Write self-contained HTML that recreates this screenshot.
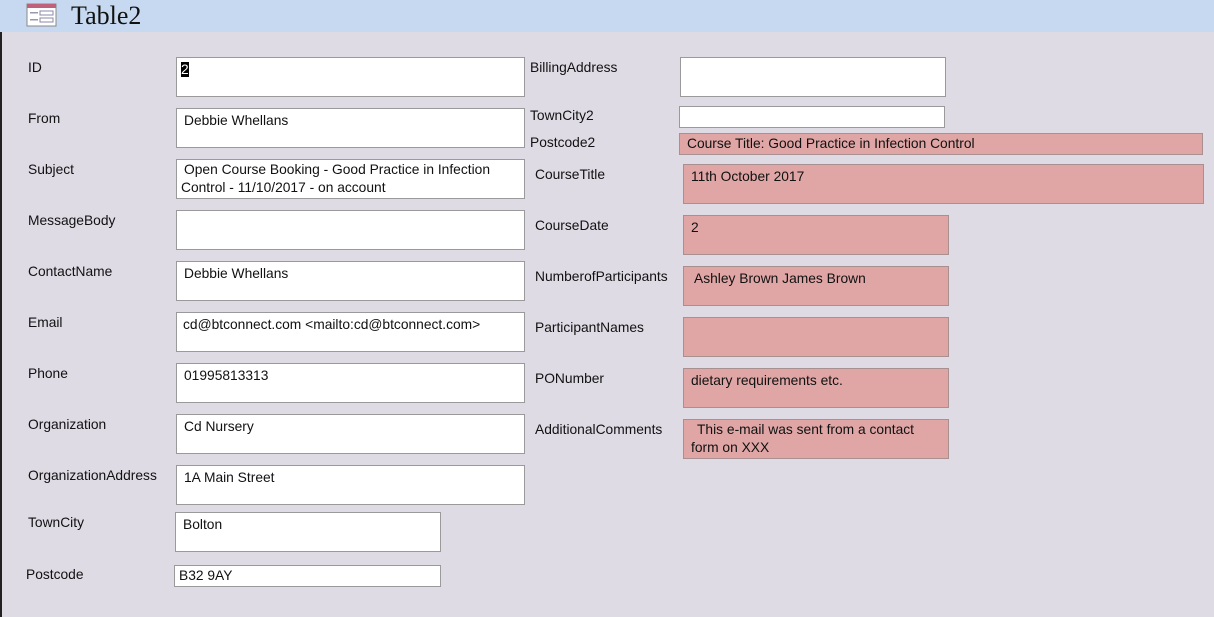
<!DOCTYPE html>
<html><head><style>
body{margin:0;width:1214px;height:617px;background:#dfdbe5;position:relative;overflow:hidden;font-family:"Liberation Sans",sans-serif;font-size:13.8px;color:#111}
.h{position:absolute;left:0;top:0;width:1214px;height:32px;background:#c6d9f0}
.t{position:absolute;left:71px;top:1px;font-family:"Liberation Serif",serif;font-size:26px;color:#111}
.lb{position:absolute;left:0;top:32px;width:2px;height:585px;background:#222}
.l{position:absolute;white-space:nowrap}
.b{position:absolute;background:#fff;border:1px solid #9a9a9a;box-sizing:border-box;padding:3px 7px;line-height:18px;white-space:nowrap}
.p{background:#e0a6a6;border-color:#a89090}
</style></head><body>
<div class="h"></div>
<svg style="position:absolute;left:26px;top:3px" width="32" height="24"><rect x="1" y="1" width="29" height="22" fill="#fff" stroke="#888"/><rect x="1" y="1" width="29" height="4" fill="#c0607a"/><rect x="4" y="9" width="8" height="1.5" fill="#99a"/><rect x="14" y="8" width="13" height="4" fill="none" stroke="#88a"/><rect x="4" y="16" width="8" height="1.5" fill="#99a"/><rect x="14" y="15" width="13" height="4" fill="none" stroke="#88a"/></svg>
<div class="t">Table2</div>
<div class="lb"></div>

<div class="l" style="left:28px;top:60px">ID</div>
<div class="b" style="left:176px;top:57px;width:349px;height:40px;padding-left:4px"><span style="background:#000;color:#fff">2</span></div>
<div class="l" style="left:28px;top:111px">From</div>
<div class="b" style="left:176px;top:108px;width:349px;height:40px">Debbie Whellans</div>
<div class="l" style="left:28px;top:162px">Subject</div>
<div class="b" style="left:176px;top:159px;width:349px;height:40px;padding-left:4px;padding-top:1px"><span style="padding-left:3px">Open Course Booking - Good Practice in Infection</span><br>Control - 11/10/2017 - on account</div>
<div class="l" style="left:28px;top:213px">MessageBody</div>
<div class="b" style="left:176px;top:210px;width:349px;height:40px"></div>
<div class="l" style="left:28px;top:264px">ContactName</div>
<div class="b" style="left:176px;top:261px;width:349px;height:40px">Debbie Whellans</div>
<div class="l" style="left:28px;top:315px">Email</div>
<div class="b" style="left:176px;top:312px;width:349px;height:40px;padding-left:6px">cd@btconnect.com &lt;mailto:cd@btconnect.com&gt;</div>
<div class="l" style="left:28px;top:366px">Phone</div>
<div class="b" style="left:176px;top:363px;width:349px;height:40px">01995813313</div>
<div class="l" style="left:28px;top:417px">Organization</div>
<div class="b" style="left:176px;top:414px;width:349px;height:40px">Cd Nursery</div>
<div class="l" style="left:28px;top:468px">OrganizationAddress</div>
<div class="b" style="left:176px;top:465px;width:349px;height:40px">1A Main Street</div>
<div class="l" style="left:28px;top:515px">TownCity</div>
<div class="b" style="left:175px;top:512px;width:266px;height:40px">Bolton</div>
<div class="l" style="left:26px;top:567px">Postcode</div>
<div class="b" style="left:174px;top:565px;width:267px;height:22px;padding:1px 4px">B32 9AY</div>

<div class="l" style="left:530px;top:60px">BillingAddress</div>
<div class="b" style="left:680px;top:57px;width:266px;height:40px"></div>
<div class="l" style="left:530px;top:108px">TownCity2</div>
<div class="b" style="left:679px;top:106px;width:266px;height:22px"></div>
<div class="l" style="left:530px;top:135px">Postcode2</div>
<div class="b p" style="left:679px;top:133px;width:524px;height:22px;padding:1px 7px">Course Title: Good Practice in Infection Control</div>
<div class="l" style="left:535px;top:167px">CourseTitle</div>
<div class="b p" style="left:683px;top:164px;width:521px;height:40px">11th October 2017</div>
<div class="l" style="left:535px;top:218px">CourseDate</div>
<div class="b p" style="left:683px;top:215px;width:266px;height:40px">2</div>
<div class="l" style="left:535px;top:269px">NumberofParticipants</div>
<div class="b p" style="left:683px;top:266px;width:266px;height:40px;padding-left:10px">Ashley Brown James Brown</div>
<div class="l" style="left:535px;top:320px">ParticipantNames</div>
<div class="b p" style="left:683px;top:317px;width:266px;height:40px"></div>
<div class="l" style="left:535px;top:371px">PONumber</div>
<div class="b p" style="left:683px;top:368px;width:266px;height:40px">dietary requirements etc.</div>
<div class="l" style="left:535px;top:422px">AdditionalComments</div>
<div class="b p" style="left:683px;top:419px;width:266px;height:40px;padding-left:13px;padding-top:1px">This e-mail was sent from a contact<br><span style="margin-left:-6px">form on XXX</span></div>
</body></html>
